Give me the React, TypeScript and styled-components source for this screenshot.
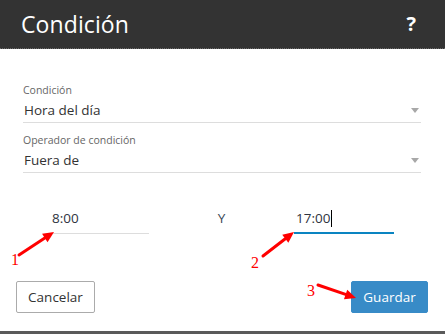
import { createGlobalStyle, styled } from 'styled-components';

const GlobalStyle = createGlobalStyle`
  html, body {
    margin: 0;
    padding: 0;
    background: #fff;
  }
  body {
    font-family: 'Open Sans', 'Noto Sans', sans-serif;
    color: #333;
  }
`;

type Pt = { x1: number; y1: number; x2: number; y2: number };

// red annotation arrows drawn over the dialog
const Arrow = ({ x1, y1, x2, y2 }: Pt) => {
  const dx = x2 - x1;
  const dy = y2 - y1;
  const len = Math.hypot(dx, dy);
  const ux = dx / len;
  const uy = dy / len;
  const head = 11;
  const half = 5;
  const bx = x2 - ux * head;
  const by = y2 - uy * head;
  const pts = [
    `${x2},${y2}`,
    `${bx - uy * half},${by + ux * half}`,
    `${bx + uy * half},${by - ux * half}`,
  ].join(' ');
  return (
    <g>
      <line x1={x1} y1={y1} x2={bx} y2={by} stroke="#f00" strokeWidth={3} strokeLinecap="round" />
      <polygon points={pts} fill="#f00" />
    </g>
  );
};

const Annotations = () => (
  <Overlay width={445} height={334} viewBox="0 0 445 334">
    <Arrow x1={19} y1={255} x2={54} y2={232} />
    <Arrow x1={263} y1={256} x2={294} y2={232} />
    <Arrow x1={318} y1={285} x2={356} y2={298} />
    <Num x={11} y={265}>1</Num>
    <Num x={251} y={268}>2</Num>
    <Num x={307} y={296}>3</Num>
  </Overlay>
);

export default function App() {
  return (
    <>
      <GlobalStyle />
      <Dialog>
        <Header>
          <Title>Condición</Title>
          <Help>?</Help>
        </Header>
        <Body>
          <Field>
            <Label>Condición</Label>
            <Value>
              Hora del día
              <Caret />
            </Value>
          </Field>
          <Field>
            <Label>Operador de condición</Label>
            <Value>
              Fuera de
              <Caret />
            </Value>
          </Field>
          <TimeRow>
            <TimeInput>8:00</TimeInput>
            <Conj>Y</Conj>
            <TimeInput $focused>
              17:00
              <Cursor />
            </TimeInput>
          </TimeRow>
        </Body>
        <Footer>
          <Button>Cancelar</Button>
          <Button $primary>Guardar</Button>
        </Footer>
        <BottomBar />
        <Annotations />
      </Dialog>
    </>
  );
}

const Dialog = styled.div`
  position: relative;
  width: 445px;
  height: 334px;
  display: flex;
  flex-direction: column;
  background: #fff;
  overflow: hidden;
`;

const Header = styled.div`
  height: 48px;
  display: flex;
  align-items: center;
  justify-content: space-between;
  padding: 0 29px 0 21px;
  background: #333333;
  border-bottom: 1px dotted #6a6a6a;
  color: #fff;
`;

const Title = styled.h1`
  margin: 0;
  font-size: 23px;
  font-weight: 400;
  letter-spacing: 0.1px;
`;

const Help = styled.span`
  font-size: 20px;
  font-weight: 700;
  margin-top: -1px;
`;

const Body = styled.div`
  padding: 34px 24px 0 23px;
  display: flex;
  flex-direction: column;
`;

const Field = styled.div`
  display: flex;
  flex-direction: column;
  gap: 3px;
  padding-bottom: 2px;
  margin-bottom: 10px;
  border-bottom: 1px solid #dddddd;
`;

const Label = styled.div`
  font-size: 10.5px;
  line-height: 14px;
  color: #666;
`;

const Value = styled.div`
  position: relative;
  font-size: 13.5px;
  line-height: 20px;
  color: #333;
  padding-left: 1px;
`;

const Caret = styled.span`
  position: absolute;
  right: 2px;
  top: 8px;
  width: 0;
  height: 0;
  border-left: 4.5px solid transparent;
  border-right: 4.5px solid transparent;
  border-top: 5px solid #a8a8a8;
`;

const TimeRow = styled.div`
  display: grid;
  grid-template-columns: 97px 1fr 100px;
  align-items: end;
  margin-top: 25px;
  padding: 0 27px 0 29px;
`;

const TimeInput = styled.div<{ $focused?: boolean }>`
  display: flex;
  align-items: center;
  height: 20px;
  font-size: 13.5px;
  color: #2f3440;
  padding: 0 0 ${(p) => (p.$focused ? 4 : 5)}px ${(p) => (p.$focused ? 2 : 0)}px;
  border-bottom: ${(p) => (p.$focused ? '2px solid #0a84c1' : '1px solid #dddddd')};
`;

const Cursor = styled.span`
  display: inline-block;
  width: 1px;
  height: 17px;
  margin-left: 1px;
  background: #000;
`;

const Conj = styled.div`
  text-align: center;
  font-size: 13.5px;
  line-height: 20px;
  color: #3a4756;
  padding-bottom: 6px;
`;

const Footer = styled.div`
  display: flex;
  justify-content: space-between;
  margin-top: 47px;
  padding: 0 17px 0 16px;
`;

const Button = styled.button<{ $primary?: boolean }>`
  height: 32px;
  padding: 0;
  width: ${(p) => (p.$primary ? 77 : 79)}px;
  font-family: 'Open Sans', 'Noto Sans', sans-serif;
  font-size: 13.5px;
  border-radius: 2px;
  cursor: pointer;
  color: ${(p) => (p.$primary ? '#fff' : '#333')};
  background: ${(p) => (p.$primary ? '#388bc7' : '#fff')};
  border: 1px solid ${(p) => (p.$primary ? '#388bc7' : '#ababab')};
`;

const BottomBar = styled.div`
  margin-top: auto;
  height: 3px;
  background: #5a5a5a;
`;

const Overlay = styled.svg`
  position: absolute;
  left: 0;
  top: 0;
  pointer-events: none;
`;

const Num = styled.text`
  font-family: 'Liberation Serif', serif;
  font-size: 16px;
  fill: #f00;
`;
